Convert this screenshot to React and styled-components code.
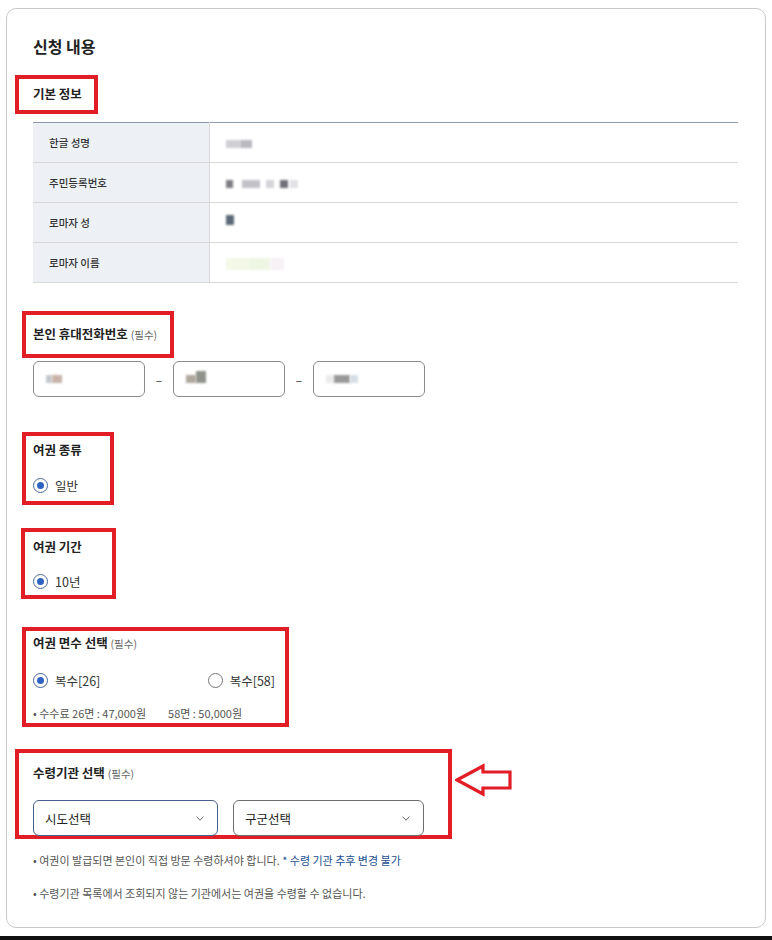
import React from "react";
import styled, { createGlobalStyle } from "styled-components";

const GlobalStyle = createGlobalStyle`
  html, body {
    margin: 0;
    padding: 0;
    background: #fff;
  }
  body {
    font-family: "Noto Sans CJK KR", "Noto Sans", sans-serif;
    color: #222;
  }
`;

const RED = "#e11d26";

const App = () => {
    return (
        <Page>
            <GlobalStyle />
            <Card>
                <PageTitle>신청 내용</PageTitle>

                <Marked $left={18} $width={83} $top={17} $pt={5} $pb={6}>
                    <SubTitle>기본 정보</SubTitle>
                </Marked>

                <InfoTable>
                    <tbody>
                        <tr>
                            <th>한글 성명</th>
                            <td>
                                <Smudge $w={14} $c="#cfcfd4" />
                                <Smudge $w={12} $c="#b9b9bf" />
                            </td>
                        </tr>
                        <tr>
                            <th>주민등록번호</th>
                            <td>
                                <Smudge $w={7} $c="#7d7d85" $gap={9} />
                                <Smudge $w={18} $c="#c2c2c8" $gap={6} />
                                <Smudge $w={8} $c="#d4d4d8" $gap={6} />
                                <Smudge $w={8} $c="#6f6f78" $gap={2} />
                                <Smudge $w={8} $c="#e2e2e6" />
                            </td>
                        </tr>
                        <tr>
                            <th>로마자 성</th>
                            <td>
                                <Smudge $w={8} $c="#5d6b78" $h={10} $up={4} />
                            </td>
                        </tr>
                        <tr>
                            <th>로마자 이름</th>
                            <td>
                                <Smudge $w={22} $c="#f4f8e6" $h={12} />
                                <Smudge $w={22} $c="#eef5e2" $h={12} />
                                <Smudge $w={14} $c="#f6f2f6" $h={12} />
                            </td>
                        </tr>
                    </tbody>
                </InfoTable>

                <Marked $left={11} $width={152} $top={28} $pt={9} $pb={9}>
                    <SubTitle>
                        본인 휴대전화번호 <Required>(필수)</Required>
                    </SubTitle>
                </Marked>

                <PhoneRow>
                    <PhoneBox>
                        <Smudge $w={6} $c="#c4c8cc" />
                        <Smudge $w={10} $c="#c8b4aa" />
                    </PhoneBox>
                    <Dash>–</Dash>
                    <PhoneBox>
                        <Smudge $w={10} $c="#b0a89e" />
                        <Smudge $w={10} $c="#8f938c" $h={12} $up={2} />
                    </PhoneBox>
                    <Dash>–</Dash>
                    <PhoneBox>
                        <Smudge $w={8} $c="#ececec" />
                        <Smudge $w={16} $c="#999" />
                        <Smudge $w={8} $c="#d6dfe6" />
                    </PhoneBox>
                </PhoneRow>

                <Marked $left={11} $width={92} $top={35} $pt={4} $pb={6}>
                    <SubTitle>여권 종류</SubTitle>
                    <RadioRow $mt={15}>
                        <RadioItem>
                            <RadioDot $on />
                            일반
                        </RadioItem>
                    </RadioRow>
                </Marked>

                <Marked $left={12} $width={95} $top={23} $pt={5} $pb={4}>
                    <SubTitle>여권 기간</SubTitle>
                    <RadioRow $mt={14}>
                        <RadioItem>
                            <RadioDot $on />
                            10년
                        </RadioItem>
                    </RadioRow>
                </Marked>

                <Marked $left={11} $width={267} $top={28} $pt={2} $pb={2}>
                    <SubTitle>
                        여권 면수 선택 <Required>(필수)</Required>
                    </SubTitle>
                    <RadioRow $mt={16} $spread>
                        <RadioItem>
                            <RadioDot $on />
                            복수[26]
                        </RadioItem>
                        <RadioItem>
                            <RadioDot />
                            복수[58]
                        </RadioItem>
                    </RadioRow>
                    <FeeNote>
                        <span>• 수수료 26면 : 47,000원</span>
                        <span>58면 : 50,000원</span>
                    </FeeNote>
                </Marked>

                <AnnotatedRow>
                    <Marked $left={18} $width={437} $top={0} $pt={10} $pb={0}>
                        <SubTitle>
                            수령기관 선택 <Required>(필수)</Required>
                        </SubTitle>
                        <SelectRow>
                            <SelectBox $active>
                                시도선택
                                <Chevron />
                            </SelectBox>
                            <SelectBox>
                                구군선택
                                <Chevron />
                            </SelectBox>
                        </SelectRow>
                    </Marked>
                    <ArrowMark viewBox="0 0 58 34" width="58" height="34">
                        <polygon
                            points="2,17 28,3 28,9 55,9 55,25 28,25 28,31"
                            fill="none"
                            stroke={RED}
                            strokeWidth="3.2"
                            strokeLinejoin="miter"
                        />
                    </ArrowMark>
                </AnnotatedRow>

                <Note $mt={13}>
                    • 여권이 발급되면 본인이 직접 방문 수령하셔야 합니다. <Accent>* 수령 기관 추후 변경 불가</Accent>
                </Note>
                <Note $mt={17}>• 수령기관 목록에서 조회되지 않는 기관에서는 여권을 수령할 수 없습니다.</Note>
            </Card>
            <BottomEdge />
        </Page>
    );
};

const Chevron = () => (
    <ChevronSvg viewBox="0 0 8 5" width="8" height="5">
        <path d="M0.6 0.6 L4 4.2 L7.4 0.6" fill="none" stroke="#555" strokeWidth="0.9" />
    </ChevronSvg>
);

const Page = styled.div`
    width: 772px;
    height: 940px;
    padding: 8px 7px 0 6px;
    box-sizing: border-box;
    display: flex;
    flex-direction: column;
    overflow: hidden;
`;

const Card = styled.div`
    width: 760px;
    height: 921px;
    box-sizing: border-box;
    border: 1px solid #c9c9c9;
    border-radius: 10px;
    padding: 25px 26px 0 26px;
`;

const BottomEdge = styled.div`
    margin-top: 8px;
    height: 4px;
    background: #111;
    margin-left: -6px;
    margin-right: -7px;
`;

const PageTitle = styled.h2`
    margin: 0;
    font-size: 16px;
    line-height: 24px;
    font-weight: 700;
    color: #222;
`;

const Marked = styled.div`
    box-sizing: border-box;
    width: ${(p) => p.$width}px;
    margin-left: -${(p) => p.$left}px;
    margin-top: ${(p) => p.$top}px;
    padding: ${(p) => p.$pt}px 0 ${(p) => p.$pb}px ${(p) => p.$left - 4}px;
    border: 4px solid ${RED};
`;

const SubTitle = styled.div`
    font-size: 12.5px;
    line-height: 20px;
    font-weight: 700;
    color: #222;
    white-space: nowrap;
`;

const Required = styled.span`
    font-size: 10.5px;
    font-weight: 400;
    color: #666;
`;

const InfoTable = styled.table`
    margin-top: 8px;
    width: 705px;
    border-collapse: collapse;
    border-top: 1px solid #8f9aa8;

    th,
    td {
        height: 39px;
        border-bottom: 1px solid #d8d8d8;
        font-size: 10.5px;
        text-align: left;
        padding: 0 16px;
    }

    th {
        width: 144px;
        background: #edf1f6;
        border-right: 1px solid #d8d8d8;
        font-weight: 500;
        color: #333;
    }
`;

const Smudge = styled.span`
    display: inline-block;
    width: ${(p) => p.$w}px;
    height: ${(p) => p.$h || 8}px;
    margin-right: ${(p) => (p.$gap === undefined ? 0 : p.$gap)}px;
    background: ${(p) => p.$c};
    filter: blur(0.8px);
    vertical-align: middle;
    position: relative;
    top: -${(p) => p.$up || 0}px;
`;

const PhoneRow = styled.div`
    margin-top: 3px;
    display: flex;
    align-items: center;
`;

const PhoneBox = styled.div`
    width: 112px;
    height: 36px;
    box-sizing: border-box;
    border: 1px solid #8a8a8a;
    border-radius: 6px;
    padding-left: 12px;
    display: flex;
    align-items: center;
`;

const Dash = styled.span`
    width: 28px;
    text-align: center;
    font-size: 12px;
    color: #333;
`;

const RadioRow = styled.div`
    margin-top: ${(p) => p.$mt}px;
    display: flex;
    align-items: center;
    justify-content: ${(p) => (p.$spread ? "space-between" : "flex-start")};
    padding-right: ${(p) => (p.$spread ? 10 : 0)}px;
    height: 20px;
`;

const RadioItem = styled.label`
    display: flex;
    align-items: center;
    gap: 7px;
    font-size: 12.5px;
    color: #333;
`;

const RadioDot = styled.span`
    width: 15px;
    height: 15px;
    box-sizing: border-box;
    border-radius: 50%;
    border: 1.3px solid ${(p) => (p.$on ? "#4a6a9c" : "#777")};
    display: flex;
    align-items: center;
    justify-content: center;

    &::after {
        content: "";
        width: 7px;
        height: 7px;
        border-radius: 50%;
        background: ${(p) => (p.$on ? "#2f63c2" : "transparent")};
    }
`;

const FeeNote = styled.div`
    margin-top: 15px;
    font-size: 11px;
    line-height: 16px;
    color: #555;
    display: flex;
    gap: 22px;
`;

const AnnotatedRow = styled.div`
    margin-top: 22px;
    display: flex;
    align-items: flex-start;
`;

const ArrowMark = styled.svg`
    margin-left: 3px;
    margin-top: 14px;
    display: block;
`;

const SelectRow = styled.div`
    margin-top: 16px;
    margin-bottom: -1px;
    display: flex;
    gap: 15px;
`;

const SelectBox = styled.div`
    width: ${(p) => (p.$active ? 185 : 191)}px;
    height: 36px;
    box-sizing: border-box;
    border: 1px solid ${(p) => (p.$active ? "#45618c" : "#6f6f6f")};
    border-radius: 6px;
    padding: 0 13px 0 11px;
    display: flex;
    align-items: center;
    justify-content: space-between;
    font-size: 12.5px;
    color: #222;
`;

const ChevronSvg = styled.svg`
    display: block;
`;

const Note = styled.div`
    margin-top: ${(p) => p.$mt}px;
    font-size: 11px;
    line-height: 16px;
    color: #555;
`;

const Accent = styled.span`
    color: #24508f;
`;

export default App;
